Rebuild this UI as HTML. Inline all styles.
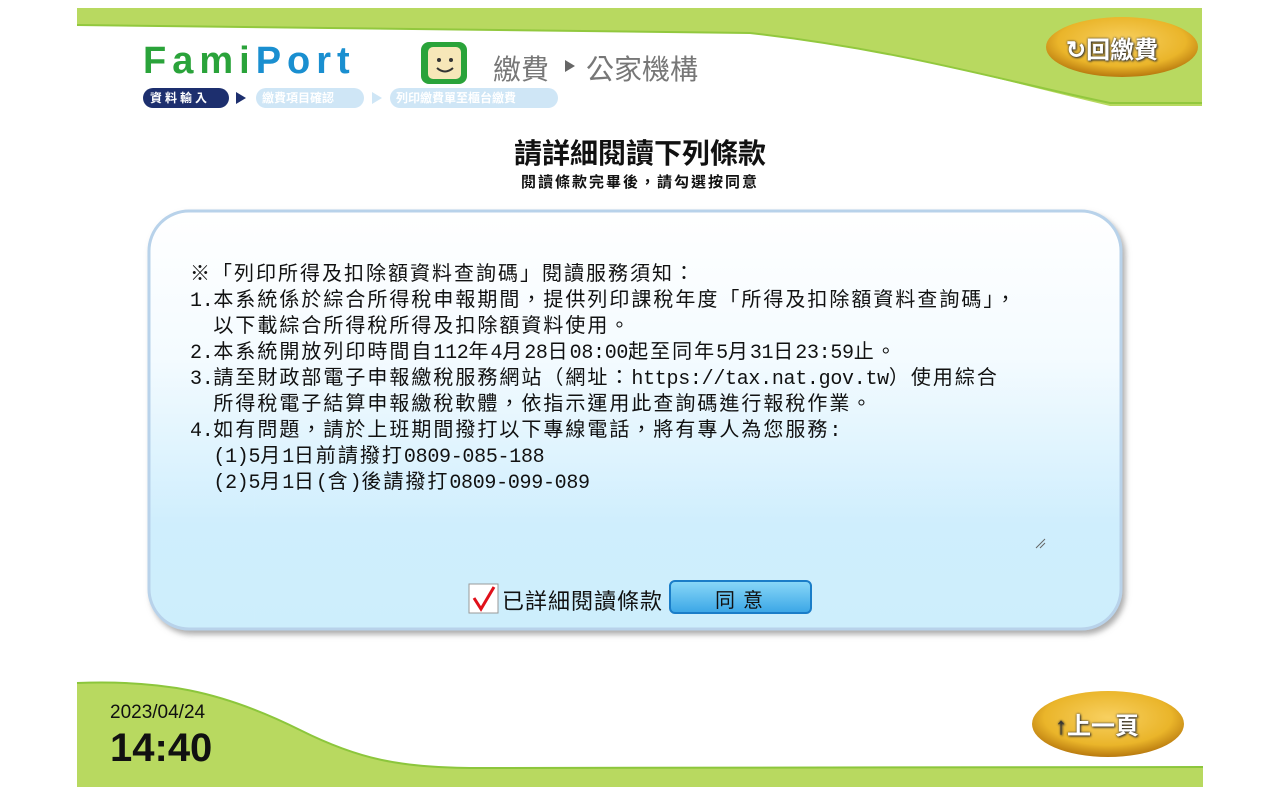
<!DOCTYPE html>
<html><head><meta charset="utf-8"><style>
*{margin:0;padding:0;box-sizing:border-box}
body{width:1280px;height:790px;background:#fff;position:relative;overflow:hidden;font-family:"Liberation Sans","Noto Sans CJK TC",sans-serif}
.abs{position:absolute}
.txt{font-family:"Liberation Mono","Noto Sans CJK TC",monospace;font-size:20px;line-height:26px;color:#111;white-space:pre;letter-spacing:2px}
.txt i{font-style:normal;letter-spacing:-0.3px}
</style></head><body>
<svg class="abs" style="left:0;top:0" width="1280" height="790">
 <defs>
  <linearGradient id="bx" x1="0" y1="0" x2="0" y2="1"><stop offset="0" stop-color="#fff"/><stop offset="0.35" stop-color="#f4fbff"/><stop offset="0.75" stop-color="#cfeefd"/><stop offset="1" stop-color="#cdeefc"/></linearGradient>
  <radialGradient id="gold" cx="0.5" cy="0.4" r="0.6"><stop offset="0" stop-color="#f8d060"/><stop offset="0.7" stop-color="#eab52a"/><stop offset="1" stop-color="#b8790e"/></radialGradient>
  <linearGradient id="btn" x1="0" y1="0" x2="0" y2="1"><stop offset="0" stop-color="#8ad8f8"/><stop offset="1" stop-color="#3aa6e6"/></linearGradient>
  <filter id="sh"><feDropShadow dx="3" dy="4" stdDeviation="3" flood-color="#777" flood-opacity="0.6"/></filter>
 </defs>
 <path d="M77 8 H1202 V106 H1110 C1000 80 900 50 750 33 L77 25 Z" fill="#b8d960"/>
 <path d="M77 25 L750 33 C900 50 1000 80 1110 103 L1202 103" fill="none" stroke="#92c83e" stroke-width="2"/>
 <path d="M77 683 C160 680 220 690 300 730 C360 760 400 767 470 768 L1203 767 V787 H77 Z" fill="#b8d960"/>
 <path d="M77 683 C160 680 220 690 300 730 C360 760 400 767 470 768 L1203 767" fill="none" stroke="#8cc63c" stroke-width="2"/>
 <rect x="149" y="211" width="972" height="418" rx="40" fill="url(#bx)" stroke="#b8d2ea" stroke-width="3" filter="url(#sh)"/>
 <path d="M1036 548 L1045 539 M1040 548 L1045 543" stroke="#666" stroke-width="1"/>
 <ellipse cx="1122" cy="47" rx="76" ry="30" fill="url(#gold)"/>
 <ellipse cx="1108" cy="724" rx="76" ry="33" fill="url(#gold)"/>
 <rect x="670" y="581" width="141" height="32" rx="5" fill="url(#btn)" stroke="#1a7dc8" stroke-width="2"/>
 <rect x="469" y="584" width="29" height="29" fill="#fff" stroke="#999"/>
 <path d="M474 598 L481 609 L494 587" fill="none" stroke="#e0101a" stroke-width="3"/>
 <rect x="421" y="42" width="46" height="42" rx="8" fill="#2aa33a"/>
 <rect x="428" y="47" width="33" height="32" rx="5" fill="#f6e7b8"/>
 <circle cx="439" cy="60" r="2" fill="#333"/><circle cx="451" cy="60" r="2" fill="#333"/>
 <path d="M437 68 Q445 75 453 68" fill="none" stroke="#333" stroke-width="2"/>
 <rect x="143" y="88" width="86" height="20" rx="10" fill="#1d2f6e"/>
 <rect x="256" y="88" width="108" height="20" rx="10" fill="#cfe6f6"/>
 <rect x="390" y="88" width="168" height="20" rx="10" fill="#cfe6f6"/>
 <path d="M236 92 L246 98 L236 104 Z" fill="#1d2f6e"/>
 <path d="M372 92 L382 98 L372 104 Z" fill="#cfe6f6"/>
 <path d="M565 60 L575 66 L565 72 Z" fill="#666"/>
</svg>
<div class="abs" style="left:143px;top:40px;font:bold 38px 'Liberation Sans',sans-serif;color:#2aa33a;letter-spacing:6px">Fami<span style="color:#1a8fd0">Port</span></div>
<div class="abs" style="left:493px;top:48px;font-size:28px;color:#777">繳費</div>
<div class="abs" style="left:586px;top:48px;font-size:28px;color:#777">公家機構</div>
<div class="abs" style="left:150px;top:89px;font-size:12px;font-weight:bold;color:#fff;letter-spacing:3px">資料輸入</div>
<div class="abs" style="left:262px;top:89px;font-size:12px;font-weight:bold;color:#fff">繳費項目確認</div>
<div class="abs" style="left:396px;top:89px;font-size:12px;font-weight:bold;color:#fff">列印繳費單至櫃台繳費</div>
<div class="abs" style="left:1066px;top:30px;font-size:24px;font-weight:bold;color:#fff;text-shadow:0 0 2px #333,1px 1px 2px #333">↻回繳費</div>
<div class="abs" style="left:1055px;top:706px;font-size:24px;font-weight:bold;color:#fff;text-shadow:0 0 2px #333,1px 1px 2px #333"><span style="color:#333">↑</span>上一頁</div>
<div class="abs" style="left:0;width:1280px;top:132px;text-align:center;font-size:28px;font-weight:bold;color:#111">請詳細閱讀下列條款</div>
<div class="abs" style="left:0;width:1280px;top:171px;text-align:center;font-size:15px;font-weight:bold;color:#111;letter-spacing:2px">閱讀條款完畢後，請勾選按同意</div>
<div class="abs txt" style="left:190px;top:263px">※「列印所得及扣除額資料查詢碼」閱讀服務須知：
<i>1.</i>本系統係於綜合所得稅申報期間，提供列印課稅年度「所得及扣除額資料查詢碼」，
<i>  </i>以下載綜合所得稅所得及扣除額資料使用。
<i>2.</i>本系統開放列印時間自<i>112</i>年<i>4</i>月<i>28</i>日<i>08:00</i>起至同年<i>5</i>月<i>31</i>日<i>23:59</i>止。
<i>3.</i>請至財政部電子申報繳稅服務網站（網址：<i>https://tax.nat.gov.tw</i>）使用綜合
<i>  </i>所得稅電子結算申報繳稅軟體，依指示運用此查詢碼進行報稅作業。
<i>4.</i>如有問題，請於上班期間撥打以下專線電話，將有專人為您服務<i>:</i>
<i>  (1)5</i>月<i>1</i>日前請撥打<i>0809-085-188</i>
<i>  (2)5</i>月<i>1</i>日<i>(</i>含<i>)</i>後請撥打<i>0809-099-089</i></div>
<div class="abs" style="left:502px;top:584px;font-size:22px;color:#111;letter-spacing:1px">已詳細閱讀條款</div>
<div class="abs" style="left:715px;top:584px;font-size:20px;color:#111;letter-spacing:8px">同意</div>
<div class="abs" style="left:110px;top:702px;font-size:19px;color:#111">2023/04/24</div>
<div class="abs" style="left:110px;top:726px;font-size:40px;font-weight:bold;color:#111">14:40</div>
</body></html>
